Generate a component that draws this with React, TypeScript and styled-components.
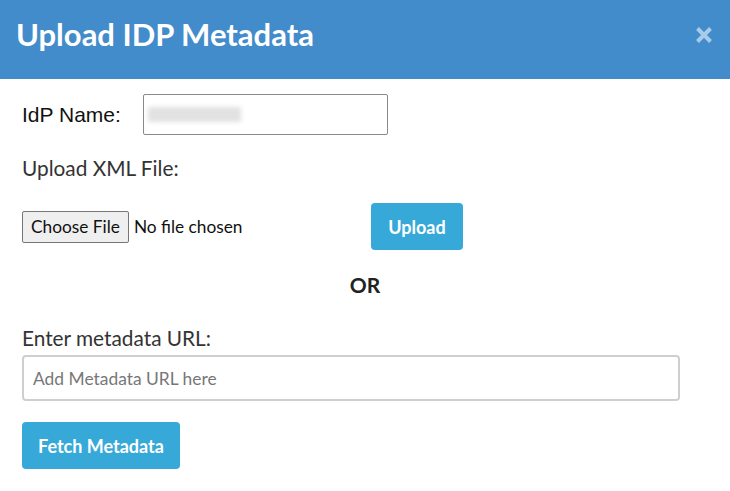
import styled, { createGlobalStyle } from 'styled-components';

const GlobalStyle = createGlobalStyle`
  html, body {
    margin: 0;
    padding: 0;
    background: #fff;
  }
  body {
    font-family: Lato, "Open Sans", sans-serif;
    color: #333;
  }
`;

// Modal shell
const Modal = styled.div`
  width: 730px;
  height: 491px;
  background: #fff;
  overflow: hidden;
`;

const Header = styled.div`
  height: 79px;
  background: #438ccb;
  display: flex;
  align-items: center;
  justify-content: space-between;
  padding: 0 17px 0 16px;
  box-sizing: border-box;
`;

const Title = styled.h1`
  margin: 0;
  font-family: Lato, sans-serif;
  font-weight: 700;
  font-size: 31px;
  color: #fff;
  letter-spacing: 0;
  padding-bottom: 12px;
`;

const CloseButton = styled.button`
  background: transparent;
  border: none;
  padding: 0;
  width: 18px;
  height: 18px;
  cursor: pointer;
  display: flex;
  margin-bottom: 9px;
`;

const Body = styled.div`
  padding: 15px 50px 0 22px;
`;

// IdP name row
const FieldRow = styled.div`
  display: flex;
  align-items: center;
`;

const InlineLabel = styled.label`
  width: 121px;
  font-family: "Liberation Sans", Arial, sans-serif;
  font-size: 21px;
  color: #111;
`;

const NameBox = styled.div`
  width: 245px;
  height: 41px;
  box-sizing: border-box;
  border: 1px solid #8a8a8a;
  border-radius: 2px;
  display: flex;
  align-items: center;
  padding-left: 4px;
`;

const Redacted = styled.span`
  width: 93px;
  height: 15px;
  background: #e2e2e2;
  filter: blur(2px);
`;

const Label = styled.div<{ $top: number }>`
  margin-top: ${(p) => p.$top}px;
  font-size: 20.8px;
  line-height: 24px;
  color: #333;
`;

// File row
const FileRow = styled.div`
  margin-top: 23px;
  display: grid;
  grid-template-columns: 349px auto;
  align-items: center;
`;

const FilePicker = styled.div`
  display: flex;
  align-items: center;
  gap: 5px;
  font-size: 17.3px;
  color: #111;
`;

const ChooseButton = styled.span`
  height: 32px;
  box-sizing: border-box;
  padding: 0 8px;
  display: flex;
  align-items: center;
  border: 1px solid #767676;
  border-radius: 2px;
  background: #efefef;
  color: #111;
`;

const PrimaryButton = styled.button<{ $width: number; $top?: number }>`
  width: ${(p) => p.$width}px;
  height: 47px;
  margin-top: ${(p) => p.$top ?? 0}px;
  border: none;
  border-radius: 4px;
  background: #36a9d9;
  color: #fff;
  font-family: Lato, sans-serif;
  font-weight: 700;
  font-size: 18px;
  cursor: pointer;
  display: block;
`;

const Divider = styled.div`
  margin: 23px -50px 0 -22px;
  text-align: center;
  font-weight: 700;
  font-size: 21px;
  line-height: 24px;
  color: #222;
`;

const UrlInput = styled.input`
  display: block;
  margin-top: 5px;
  width: 100%;
  height: 46px;
  box-sizing: border-box;
  border: 2px solid #cfcfcf;
  border-radius: 4px;
  padding: 0 9px;
  font-family: Lato, sans-serif;
  font-size: 17.4px;
  color: #333;
  outline: none;

  &::placeholder {
    color: #777;
  }
`;

export default function App() {
  return (
    <>
      <GlobalStyle />
      <Modal>
        <Header>
          <Title>Upload IDP Metadata</Title>
          <CloseButton aria-label="Close">
            <svg width="18" height="18" viewBox="0 0 18 18">
              <path
                d="M2.5 2.5 L15.5 15.5 M15.5 2.5 L2.5 15.5"
                stroke="#a9cbea"
                strokeWidth="4"
                strokeLinecap="butt"
              />
            </svg>
          </CloseButton>
        </Header>

        <Body>
          <FieldRow>
            <InlineLabel>IdP Name:</InlineLabel>
            <NameBox>
              <Redacted />
            </NameBox>
          </FieldRow>

          <Label $top={21}>Upload XML File:</Label>

          <FileRow>
            <FilePicker>
              <ChooseButton>Choose File</ChooseButton>
              <span>No file chosen</span>
            </FilePicker>
            <PrimaryButton $width={92}>Upload</PrimaryButton>
          </FileRow>

          <Divider>OR</Divider>

          <Label $top={29}>Enter metadata URL:</Label>
          <UrlInput placeholder="Add Metadata URL here" />

          <PrimaryButton $width={158} $top={21}>
            Fetch Metadata
          </PrimaryButton>
        </Body>
      </Modal>
    </>
  );
}
